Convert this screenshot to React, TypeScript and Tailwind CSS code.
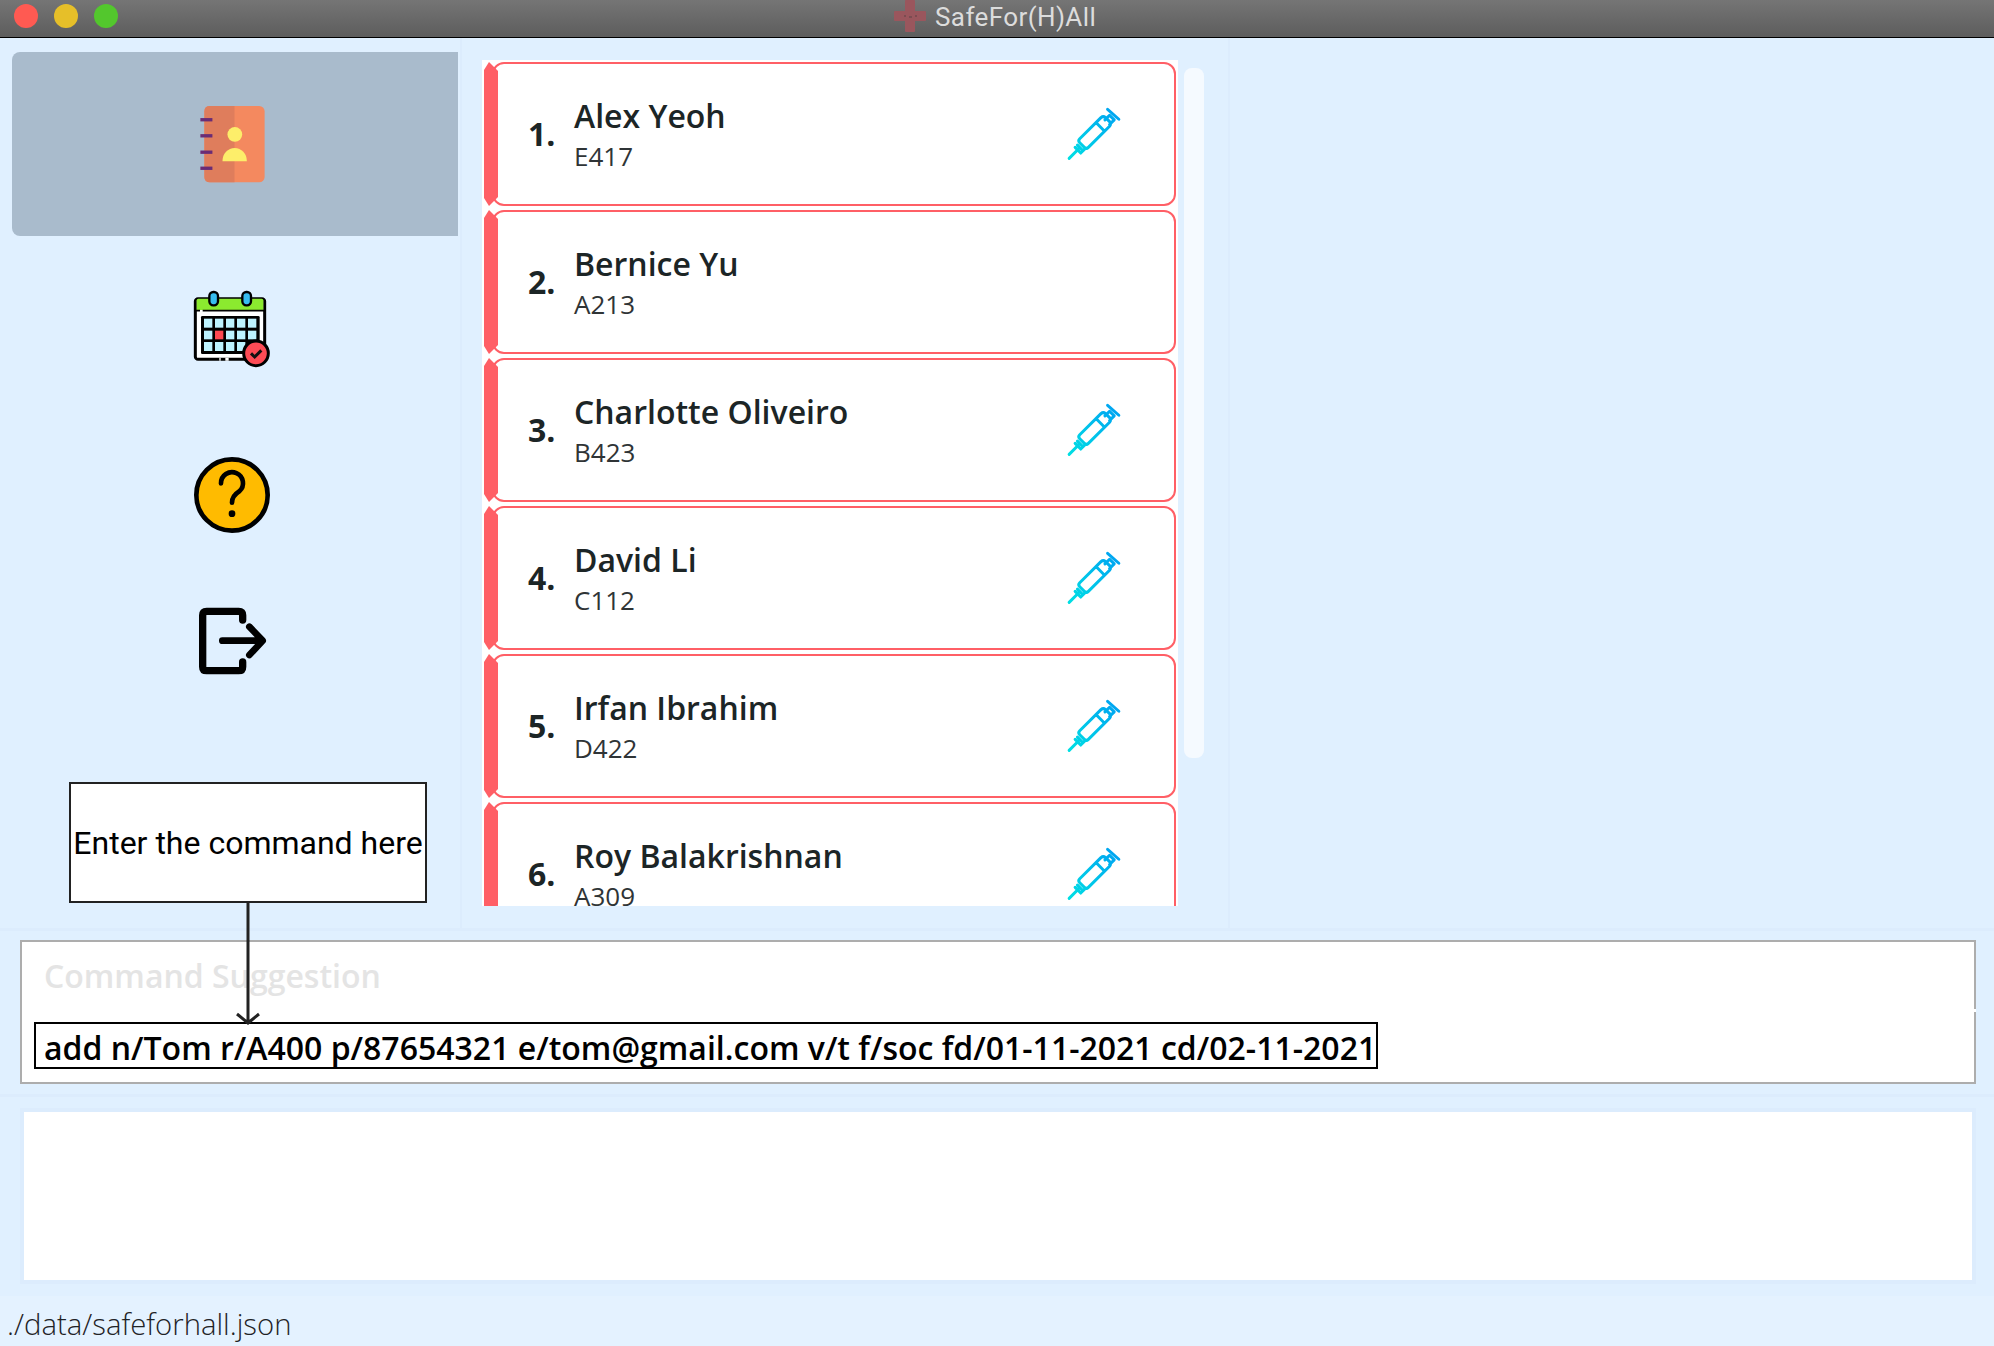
import React from "react";

const OPEN = "font-['Open_Sans',sans-serif]";

function Syringe() {
  return (
    <svg viewBox="100 165 180 175" className="w-[60px] h-[58px] shrink-0" fill="none">
      <defs>
        <linearGradient id="syr" gradientUnits="userSpaceOnUse" x1="118" y1="326" x2="265" y2="182">
          <stop offset="0" stopColor="#00dfe3" />
          <stop offset="1" stopColor="#00a2f2" />
        </linearGradient>
      </defs>
      <path
        d="M118 326 L150 294 M143 286 L160 303 M136 293 L153 310 L166 297 M150 267 L214 203 Q221 197 228 203 L240 215 Q246 222 240 229 L176 293 Q170 299 164 293 L150 279 Q144 273 150 267 Z M199 218 L225 244 M226 210 L240 196 L254 210 L240 224 M234 178 L268 208"
        stroke="url(#syr)"
        strokeWidth="9"
        strokeLinecap="round"
        strokeLinejoin="round"
      />
    </svg>
  );
}

function Book() {
  return (
    <svg viewBox="575 300 260 260" className="w-[87px] h-[87px]">
      <rect x="612" y="315" width="180" height="228" rx="16" fill="#f4895f" />
      <path d="M702 315 H628 Q612 315 612 331 V527 Q612 543 628 543 H702 Z" fill="#df7d5c" />
      <rect x="600" y="351" width="36" height="10" fill="#6a2c75" />
      <rect x="600" y="399" width="36" height="10" fill="#6a2c75" />
      <rect x="600" y="448" width="36" height="10" fill="#6a2c75" />
      <rect x="600" y="496" width="36" height="10" fill="#6a2c75" />
      <circle cx="703" cy="400" r="22" fill="#fdee6a" />
      <path d="M666 480 A36 39 0 0 1 739 480 Z" fill="#fdee6a" />
    </svg>
  );
}

function Calendar() {
  const xs = [102, 135, 168, 201, 234];
  const ys = [146, 182, 216];
  return (
    <svg viewBox="0 0 390 360" className="w-[130px] h-[120px]">
      <rect x="76" y="86" width="208" height="182" rx="8" fill="#fff" stroke="#000" strokeWidth="9" />
      <path d="M80 91 Q80 86 85 86 H275 Q280 86 280 91 V120 H80 Z" fill="#8bea2f" />
      <path d="M76 122 H284" stroke="#000" strokeWidth="5" strokeDasharray="14 8 200 0" />
      <rect x="93" y="138" width="176" height="114" fill="#000" rx="4" />
      {ys.map((y) =>
        xs.map((x) => (
          <rect key={`${x}-${y}`} x={x} y={y} width="25" height={y === 182 ? 26 : 27} fill={x === 135 && y === 182 ? "#fe4a52" : "#bdf3ff"} />
        ))
      )}
      <rect x="118" y="66" width="26" height="40" rx="12" fill="#37bcef" stroke="#000" strokeWidth="7" />
      <rect x="217" y="66" width="26" height="40" rx="12" fill="#37bcef" stroke="#000" strokeWidth="7" />
      <path d="M148 268 H152 M166 268 H176" stroke="#fff" strokeWidth="9" />
      <circle cx="258" cy="250" r="37" fill="#fd4b55" stroke="#000" strokeWidth="9" />
      <path d="M243 250 L254 261 L274 241" fill="none" stroke="#111" strokeWidth="9" />
    </svg>
  );
}

function Help() {
  return (
    <svg viewBox="0 0 390 330" className="w-[130px] h-[110px]" fill="none">
      <circle cx="186" cy="165" r="107" fill="#ffbb00" stroke="#000" strokeWidth="14" />
      <path d="M153 130 A33 33 0 1 1 208 154 Q186 168 186 188" stroke="#000" strokeWidth="14" strokeLinecap="round" />
      <circle cx="186" cy="221" r="10" fill="#000" />
    </svg>
  );
}

function Exit() {
  return (
    <svg viewBox="0 450 390 300" className="w-[130px] h-[100px]" fill="none">
      <path
        d="M218 540 V526 Q218 514 206 514 H110 Q98 514 98 526 V680 Q98 692 110 692 H206 Q218 692 218 680 V666"
        stroke="#000"
        strokeWidth="22"
        strokeLinecap="round"
      />
      <path d="M157 602 H272 M238 560 L278 602 L238 645" stroke="#000" strokeWidth="20" strokeLinecap="round" strokeLinejoin="round" />
    </svg>
  );
}

function Card({ n, name, code, shot }: { n: number; name: string; code: string; shot: boolean }) {
  return (
    <div className="relative h-[144px] shrink-0 pl-[8px]">
      <div className="h-full flex items-center rounded-[12px] border-2 border-[#ff5f66] bg-white pl-[34px] pr-[51px]">
        <div className={`${OPEN} w-[46px] text-[32px] font-bold text-[#1c2526] leading-none`}>{n}.</div>
        <div className={`${OPEN} flex-1 min-w-0`}>
          <div className="text-[32px] font-semibold text-[#1c2526] leading-[44px] mt-[-1px]">{name}</div>
          <div className="text-[26px] text-[#2f3436] leading-[36px]">{code}</div>
        </div>
        {shot && <Syringe />}
      </div>
      <span className="absolute left-0 top-0 bottom-0 w-[14px] bg-[#ff5f66] [clip-path:polygon(0_8px,5px_0,14px_9px,14px_calc(100%-9px),5px_100%,0_calc(100%-8px))]" />
    </div>
  );
}

const PEOPLE = [
  { name: "Alex Yeoh", code: "E417", shot: true },
  { name: "Bernice Yu", code: "A213", shot: false },
  { name: "Charlotte Oliveiro", code: "B423", shot: true },
  { name: "David Li", code: "C112", shot: true },
  { name: "Irfan Ibrahim", code: "D422", shot: true },
  { name: "Roy Balakrishnan", code: "A309", shot: true },
];

export default function App() {
  return (
    <div className="relative w-[1994px] h-[1346px] overflow-hidden bg-[#e0f0ff]">
      <header className="relative h-[38px] border-b border-black bg-gradient-to-b from-[#757575] to-[#5d5d5d] flex items-center">
        <div className="flex gap-[16px] pl-[14px] mt-[-5px]">
          <span className="w-[24px] h-[24px] rounded-full bg-[#ff5a52]" />
          <span className="w-[24px] h-[24px] rounded-full bg-[#e6bf29]" />
          <span className="w-[24px] h-[24px] rounded-full bg-[#53c72d]" />
        </div>
        <div className="absolute left-[894px] top-0 flex items-center gap-[9px] h-[34px]">
          <svg viewBox="0 0 32 32" className="w-[32px] h-[32px] mt-[-2px]">
            <path d="M11 1 Q11 0 12 0 H20 Q21 0 21 1 V11 H31 Q32 11 32 12 V20 Q32 21 31 21 H21 V31 Q21 32 20 32 H12 Q11 32 11 31 V21 H1 Q0 21 0 20 V12 Q0 11 1 11 H11 Z" fill="#9a565d" />
            <path d="M10 16 H12 M15 17 H18 M21 16 H23" stroke="#5c4347" strokeWidth="1" />
          </svg>
          <span className="font-['Roboto',sans-serif] text-[26px] leading-none text-[#dcdcdc] tracking-[0.4px]">SafeFor(H)All</span>
        </div>
      </header>

      <main className="h-[890px] flex">
        <nav className="w-[462px] shrink-0 border-r-2 border-[#dcecfd] pl-[12px] pt-[14px] pr-[2px]">
          <div className="h-[184px] rounded-l-[8px] bg-[#a9bbcc] flex items-center justify-center">
            <Book />
          </div>
          <div className="h-[188px] flex items-center justify-center">
            <Calendar />
          </div>
          <div className="h-[142px] flex items-center justify-center">
            <Help />
          </div>
          <div className="h-[148px] flex items-center justify-center">
            <Exit />
          </div>
        </nav>
        <section className="w-[768px] shrink-0 border-r-2 border-[#dcecfd] flex items-start pl-[20px] pt-[22px]">
          <div className="w-[696px] h-[846px] overflow-hidden bg-white p-[2px] flex flex-col gap-[4px]">
            {PEOPLE.map((p, i) => (
              <Card key={p.name} n={i + 1} {...p} />
            ))}
          </div>
          <div className="ml-[6px] mt-[8px] w-[20px] h-[690px] rounded-[8px] bg-[#f5faff]" />
        </section>
      </main>

      <section className="h-[166px] border-t-[3px] border-[#dcecfd] pt-[9px] px-[20px] pr-[18px]">
        <div className="relative h-[144px] border-2 border-[#adadad] bg-white pl-[12px]">
          <div className={`${OPEN} pl-[10px] pt-[12px] h-[80px] text-[32px] font-semibold leading-[44px] text-[#e4e4e4]`}>Command Suggestion</div>
          <div className={`${OPEN} inline-block h-[47px] border-2 border-black pl-[8px] pr-0 pt-[2px] text-[32px] font-semibold leading-[44px] text-black whitespace-nowrap`}>
            add n/Tom r/A400 p/87654321 e/tom@gmail.com v/t f/soc fd/01-11-2021 cd/02-11-2021
          </div>
          <span className="absolute right-[-2px] top-[67px] w-[2px] h-[3px] bg-white" />
        </div>
      </section>

      <section className="h-[202px] border-t-[3px] border-[#dcecfd] pt-[11px] px-[20px] pr-[18px]">
        <div className="h-[176px] border-4 border-[#dcecfd] bg-white" />
      </section>

      <footer className={`${OPEN} h-[50px] bg-[#e4f2ff] pl-[7px] pt-[6px] text-[29.3px] font-light leading-[44px] text-[#1f2326]`}>
        ./data/safeforhall.json
      </footer>

      <div className="absolute left-[69px] top-[782px] w-[358px] h-[121px] border-2 border-[#222] bg-white flex items-center justify-center font-['Roboto',sans-serif] text-[32px] leading-none text-black whitespace-nowrap">
        Enter the command here
      </div>
      <svg className="absolute left-[236px] top-[903px] w-[24px] h-[122px]" viewBox="0 0 24 122" fill="none">
        <path d="M12 0 V118 M1 111 L12 120 L23 111" stroke="#222" strokeWidth="3" />
      </svg>
    </div>
  );
}
